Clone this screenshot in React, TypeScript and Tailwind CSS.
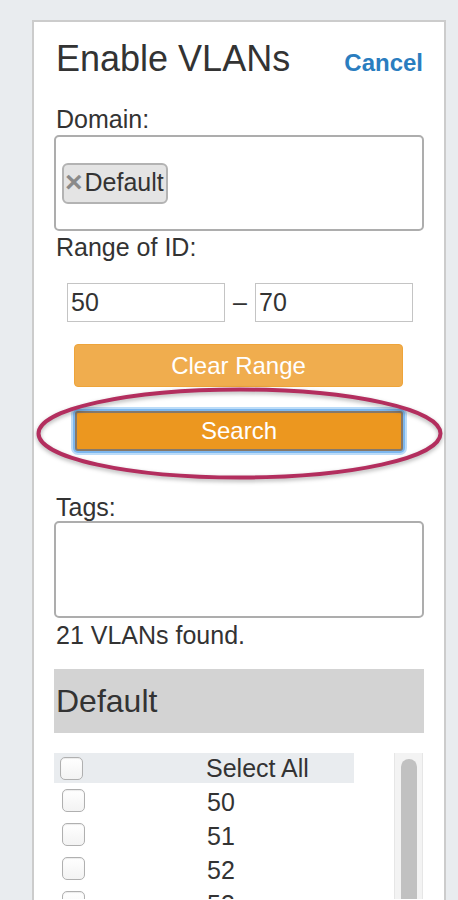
import React from "react";

// only the rows that fit in the visible part of the list
const ids = [50, 51, 52, 53];

function Checkbox() {
  return (
    <span className="block w-[23px] h-[23px] rounded-[5px] border border-[#b0b0b0] bg-gradient-to-b from-white to-[#f3f3f3] shadow-[inset_0_1px_1px_rgba(0,0,0,0.08)]" />
  );
}

export default function App() {
  return (
    <div
      className="relative h-[900px] overflow-hidden bg-[#e9ecef] pt-5 pl-8 text-[#333]"
      style={{ fontFamily: '"Liberation Sans", Arial, sans-serif' }}
    >
      <div className="w-[414px] h-[900px] border-2 border-[#cccccc] bg-white px-5 pt-[15px]">
        {/* header */}
        <div className="flex items-baseline justify-between">
          <h1 className="text-[36px] leading-[44px] font-normal pl-0.5">Enable VLANs</h1>
          <button className="text-[24px] font-bold text-[#2a7dbf] pr-px">Cancel</button>
        </div>

        <div className="mt-6 text-[25px] leading-[28px] pl-0.5">Domain:</div>
        <div className="mt-0.5 h-[96px] rounded-[5px] border-2 border-[#adadad] flex items-center px-1.5">
          <span className="flex items-center h-[41px] rounded-[6px] border-2 border-[#b3b3b3] bg-[#e4e4e4] pr-0.5 text-[25px]">
            <span className="text-[30px] font-bold text-[#8a8a8a] leading-none ml-px mr-0.5 -mt-0.5">×</span>
            Default
          </span>
        </div>

        <div className="mt-0.5 text-[25px] leading-[28px] pl-0.5">Range of ID:</div>
        <div className="mt-[22px] flex items-center pl-[13px]">
          <div className="w-[158px] h-[39px] border border-[#c4c4c4] flex items-center pl-[3px] text-[25px]">50</div>
          <span className="w-[30px] text-center text-[25px]">–</span>
          <div className="w-[158px] h-[39px] border border-[#c4c4c4] flex items-center pl-[3px] text-[25px]">70</div>
        </div>

        <div className="mt-[22px] pl-5 pr-5">
          <button className="w-[329px] h-[43px] rounded-[4px] border border-[#eea43a] bg-[#f0ad4e] text-white text-[24px]">
            Clear Range
          </button>
          <button className="mt-6 ml-px w-[328px] h-[40px] rounded-[3px] border-2 border-[#86796a] bg-[#ec971f] text-white text-[24px] shadow-[0_0_0_2px_#7db7ee,0_0_0_4px_#bcdcf8]">
            Search
          </button>
        </div>

        <div className="mt-[42px] text-[25px] leading-[28px] pl-0.5">Tags:</div>
        <div className="h-[97px] rounded-[5px] border-2 border-[#adadad]" />
        <div className="mt-[3px] text-[25px] leading-[28px] pl-0.5">21 VLANs found.</div>

        <div className="mt-5 h-16 bg-[#d3d3d3] text-[32px] leading-[64px] pl-0.5">Default</div>

        <div className="mt-5 flex h-[146px] overflow-hidden">
          <div className="w-[300px]">
            <div className="flex items-center h-[30px] bg-[#e9ecef]">
              <div className="w-[152px] pl-1.5">
                <Checkbox />
              </div>
              <span className="text-[25px] leading-[30px]">Select All</span>
            </div>
            <div className="pt-0.5">
              {ids.map((id) => (
                <div key={id} className="flex items-start h-[34px]">
                  <div className="w-[152px] pl-2 pt-1">
                    <Checkbox />
                  </div>
                  <span className="text-[25px] leading-[34px] pl-px">{id}</span>
                </div>
              ))}
            </div>
          </div>
          <div className="ml-10 w-[29px] bg-[#f3f3f3] border-l border-r border-[#e6e6e6] pt-1.5 flex justify-center">
            <div className="w-4 h-[300px] rounded-full bg-[#c1c1c1]" />
          </div>
        </div>
      </div>

      {/* annotation around Search */}
      <svg
        className="absolute left-[33px] top-[384px] pointer-events-none"
        width="414"
        height="102"
        style={{ filter: "drop-shadow(0 2px 2px rgba(0,0,0,0.3))" }}
      >
        <ellipse cx="206.5" cy="49.5" rx="201" ry="44" fill="none" stroke="#b32e5e" strokeWidth="4" />
      </svg>
    </div>
  );
}
